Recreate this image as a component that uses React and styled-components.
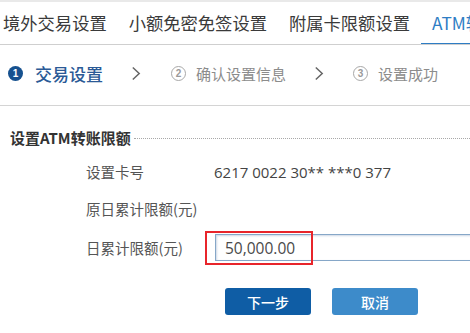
import React from "react";
import styled, { createGlobalStyle } from "styled-components";

const Global = createGlobalStyle`
  html, body { margin: 0; padding: 0; background: #fff; }
  body { font-family: "Noto Sans CJK SC", "Noto Sans", sans-serif; width: 470px; height: 333px; overflow: hidden; }
  * { box-sizing: border-box; }
`;

const Page = styled.div`
  width: 470px;
  height: 333px;
  overflow: hidden;
  border-top: 2px solid #e9e9e9;
`;

const Tabs = styled.nav`
  display: flex;
  height: 43px;
  border-bottom: 1px solid #cfcfcf;
  margin-left: -8px;
  white-space: nowrap;
  overflow: hidden;
`;

const Tab = styled.div`
  position: relative;
  display: flex;
  align-items: center;
  padding: 0 11px 2px;
  font-size: 17.3px;
  color: ${(p) => (p.$active ? "#2e7dc4" : "#3a3a3a")};
  flex-shrink: 0;
  &::after {
    content: "";
    display: ${(p) => (p.$active ? "block" : "none")};
    position: absolute;
    left: 0;
    right: 0;
    bottom: -2px;
    height: 3px;
    background: #2e7dc4;
  }
`;

const Steps = styled.div`
  display: flex;
  align-items: center;
  height: 61px;
  padding: 0 0 3px 8px;
  border-bottom: 1px solid #d4d4d4;
`;

const Step = styled.div`
  display: flex;
  align-items: center;
  gap: ${(p) => (p.$active ? "12px" : "10px")};
`;

const Circle = styled.span`
  width: 15px;
  height: 15px;
  border-radius: 50%;
  display: flex;
  align-items: center;
  justify-content: center;
  font-family: "Liberation Sans", sans-serif;
  font-size: 10px;
  font-weight: 700;
  background: ${(p) => (p.$active ? "#16518f" : "#fff")};
  color: ${(p) => (p.$active ? "#fff" : "#9a9a9a")};
  border: ${(p) => (p.$active ? "none" : "1px solid #a8a8a8")};
`;

const StepLabel = styled.span`
  font-size: ${(p) => (p.$active ? "17px" : "15px")};
  color: ${(p) => (p.$active ? "#2b5a96" : "#8c8c8c")};
  font-weight: ${(p) => (p.$active ? 500 : 400)};
`;

const Chevron = styled.svg`
  width: 10px;
  height: 15px;
  margin: ${(p) => p.$m};
`;

const SectionTitle = styled.div`
  display: flex;
  align-items: center;
  gap: 3px;
  width: 100%;
  margin-top: 21px;
  padding-left: 10px;
  font-size: 15px;
  font-weight: 700;
  color: #333;
`;

const TitleText = styled.span`
  flex: none;
`;

const DottedRule = styled.span`
  display: block;
  flex: 1 1 auto;
  min-width: 0;
  height: 0;
  margin-top: 2px;
  border-top: 1px dotted #a8a8a8;
`;

const Form = styled.div`
  display: grid;
  grid-template-columns: 128px 1fr;
  grid-template-rows: 37px 37px 41px;
  padding-left: 86px;
  margin-top: 5px;
  color: #555;
  font-size: 14.5px;
`;

const Label = styled.div`
  display: flex;
  align-items: center;
`;

const Value = styled.div`
  display: flex;
  align-items: center;
  font-family: "Open Sans", "Noto Sans", sans-serif;
  font-size: 15px;
  color: #444;
`;

const InputWrap = styled.div`
  position: relative;
  display: flex;
  align-items: center;
  padding-left: 1px;
`;

const Input = styled.div`
  width: 280px;
  height: 27px;
  border: 1px solid #86a7c8;
  box-shadow: inset 1px 1px 2px rgba(60, 100, 150, 0.25);
  display: flex;
  align-items: center;
  padding-left: 9px;
  font-family: "Open Sans", "Noto Sans", sans-serif;
  font-size: 15.5px;
  color: #4a4a4a;
`;

const Highlight = styled.div`
  position: absolute;
  left: -9px;
  top: 3.5px;
  width: 108px;
  height: 34px;
  border: 2px solid #e8252b;
  pointer-events: none;
`;

const Buttons = styled.div`
  display: flex;
  gap: 21px;
  padding-left: 225px;
  margin-top: 20px;
`;

const Button = styled.button`
  width: 86px;
  height: 27px;
  border: none;
  border-radius: 3px;
  background: ${(p) => (p.$primary ? "#0f5da5" : "#3d8bca")};
  color: #fff;
  font-family: "Noto Sans CJK SC", sans-serif;
  font-size: 14px;
  font-weight: 500;
  padding: 0;
`;

const Arrow = ({ m }) => (
  <Chevron $m={m} viewBox="0 0 10 15">
    <path d="M1.8 1.5 L8.2 7.5 L1.8 13.5" fill="none" stroke="#666" strokeWidth="1.5" />
  </Chevron>
);

export default function App() {
  return (
    <>
      <Global />
      <Page>
        <Tabs>
          <Tab>境外交易设置</Tab>
          <Tab>小额免密免签设置</Tab>
          <Tab>附属卡限额设置</Tab>
          <Tab $active>ATM转账限额设置</Tab>
        </Tabs>
        <Steps>
          <Step $active>
            <Circle $active>1</Circle>
            <StepLabel $active>交易设置</StepLabel>
          </Step>
          <Arrow m="0 30px 0 28px" />
          <Step>
            <Circle>2</Circle>
            <StepLabel>确认设置信息</StepLabel>
          </Step>
          <Arrow m="0 29px 0 28px" />
          <Step>
            <Circle>3</Circle>
            <StepLabel>设置成功</StepLabel>
          </Step>
        </Steps>
        <SectionTitle>
          <TitleText>设置ATM转账限额</TitleText>
          <DottedRule />
        </SectionTitle>
        <Form>
          <Label>设置卡号</Label>
          <Value>6217 0022 30** ***0 377</Value>
          <Label>原日累计限额(元)</Label>
          <Value />
          <Label>日累计限额(元)</Label>
          <InputWrap>
            <Input>50,000.00</Input>
            <Highlight />
          </InputWrap>
        </Form>
        <Buttons>
          <Button $primary>下一步</Button>
          <Button>取消</Button>
        </Buttons>
      </Page>
    </>
  );
}
